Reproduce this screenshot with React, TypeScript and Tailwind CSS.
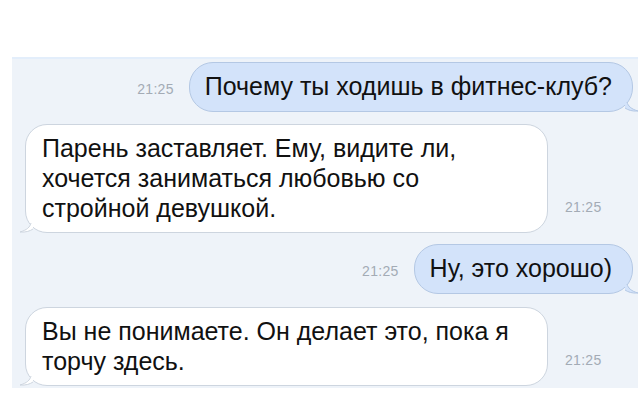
const font = { fontFamily: '"Liberation Sans", Arial, sans-serif' };

const Time = ({ className = '' }: { className?: string }) => (
  <span className={`text-[14px] text-[#a3abb5] tracking-[0.3px] ${className}`}>21:25</span>
);

const OutTail = () => (
  <svg className="absolute right-[-7px] bottom-[-1px]" width="14" height="16" viewBox="0 0 14 16">
    <path d="M0 0 C1 7 4 12 13 15 C7 15.5 3 14 0 12 Z" fill="#d3e3fa" />
    <path d="M2 6 C3 10 6 13 13 15 C7 15.5 3 14 0 12" fill="none" stroke="#b4c8e4" strokeWidth="1" />
  </svg>
);

const InTail = () => (
  <svg className="absolute left-[-7px] bottom-[-1px]" width="14" height="16" viewBox="0 0 14 16">
    <path d="M14 0 C13 7 10 12 1 15 C7 15.5 11 14 14 12 Z" fill="#ffffff" />
    <path d="M12 6 C11 10 8 13 1 15 C7 15.5 11 14 14 12" fill="none" stroke="#cdd5df" strokeWidth="1" />
  </svg>
);

const Outgoing = ({ text }: { text: string }) => (
  <div className="flex items-center justify-end pr-[5px]">
    <Time className="mr-[15px] mt-[4px]" />
    <div className="relative rounded-[24px] border border-[#b4c8e4] bg-[#d3e3fa] pl-[15px] pr-[20px] pt-[10px] pb-[11px] text-[25px] leading-[27px] text-[#111111]">
      {text}
      <OutTail />
    </div>
  </div>
);

const Incoming = ({ lines }: { lines: string[] }) => (
  <div className="flex items-end pl-[13px]">
    <div className="relative w-[523px] rounded-[22px] border border-[#cdd5df] bg-white pl-[16px] pt-[8px] pb-[9px] text-[25px] leading-[30px] text-[#111111]">
      {lines.map((l, i) => (
        <div key={i}>{l}</div>
      ))}
      <InTail />
    </div>
    <Time className="ml-[17px] mb-[15px]" />
  </div>
);

export default function App() {
  return (
    <div className="w-[638px] h-[401px] bg-white pt-[57px]" style={font}>
      <div className="ml-[12px] bg-[#eef3f9] border-t-2 border-[#e3eefb] pt-[3px] pb-[2px] flex flex-col">
        <Outgoing text="Почему ты ходишь в фитнес-клуб?" />
        <div className="mt-[12px]">
          <Incoming
            lines={[
              'Парень заставляет. Ему, видите ли,',
              'хочется заниматься любовью со',
              'стройной девушкой.',
            ]}
          />
        </div>
        <div className="mt-[11px]">
          <Outgoing text="Ну, это хорошо)" />
        </div>
        <div className="mt-[13px]">
          <Incoming lines={['Вы не понимаете. Он делает это, пока я', 'торчу здесь.']} />
        </div>
      </div>
    </div>
  );
}
